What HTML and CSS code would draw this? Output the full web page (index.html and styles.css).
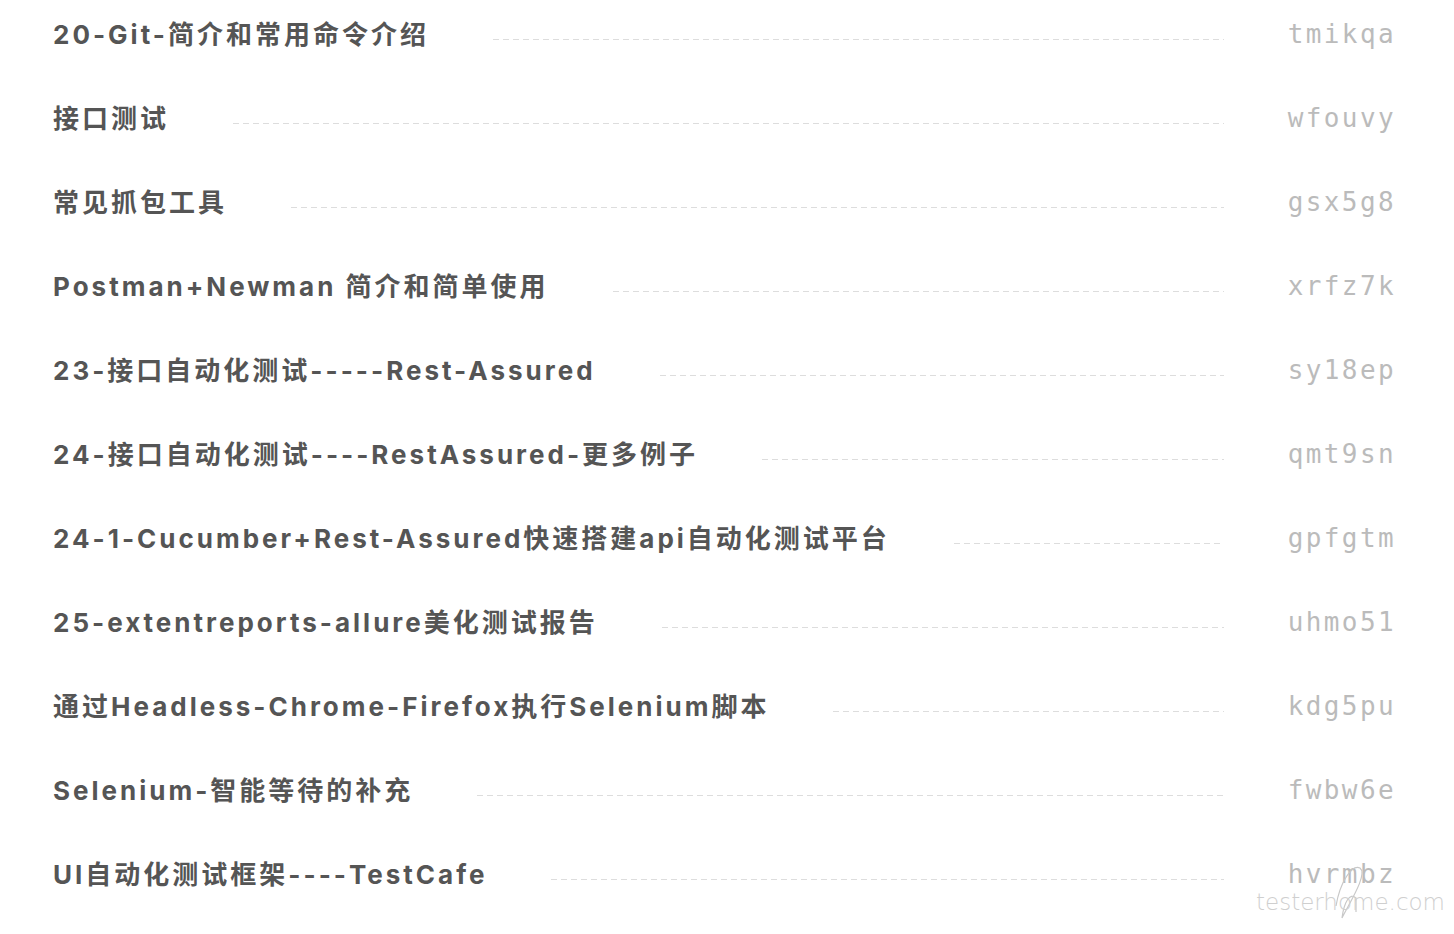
FILE: index.html
```html
<!DOCTYPE html>
<html lang="zh">
<head>
<meta charset="utf-8">
<title>列表</title>
<link rel="stylesheet" href="styles.css">
</head>
<body>
<ul class="list">
  <li class="row"><span class="title">20-Git-简介和常用命令介绍</span><span class="leader"></span><span class="code">tmikqa</span></li>
  <li class="row"><span class="title">接口测试</span><span class="leader"></span><span class="code">wfouvy</span></li>
  <li class="row"><span class="title">常见抓包工具</span><span class="leader"></span><span class="code">gsx5g8</span></li>
  <li class="row"><span class="title">Postman+Newman 简介和简单使用</span><span class="leader"></span><span class="code">xrfz7k</span></li>
  <li class="row"><span class="title">23-接口自动化测试-----Rest-Assured</span><span class="leader"></span><span class="code">sy18ep</span></li>
  <li class="row"><span class="title">24-接口自动化测试----RestAssured-更多例子</span><span class="leader"></span><span class="code">qmt9sn</span></li>
  <li class="row"><span class="title">24-1-Cucumber+Rest-Assured快速搭建api自动化测试平台</span><span class="leader"></span><span class="code">gpfgtm</span></li>
  <li class="row"><span class="title">25-extentreports-allure美化测试报告</span><span class="leader"></span><span class="code">uhmo51</span></li>
  <li class="row"><span class="title">通过Headless-Chrome-Firefox执行Selenium脚本</span><span class="leader"></span><span class="code">kdg5pu</span></li>
  <li class="row"><span class="title">Selenium-智能等待的补充</span><span class="leader"></span><span class="code">fwbw6e</span></li>
  <li class="row"><span class="title">UI自动化测试框架----TestCafe</span><span class="leader"></span><span class="code">hvrmbz</span></li>
</ul>
<div class="watermark">
  <svg class="wm-loop" width="40" height="60" viewBox="0 0 40 60"><path d="M6 44 C 10 20, 22 2, 30 6 C 38 12, 20 40, 12 56 M 12 56 C 14 40, 20 30, 26 36 L 26 50" fill="none" stroke="#c8c8c8" stroke-width="1.2"/></svg>
  <span class="wm-text">testerhome.com</span>
</div>
</body>
</html>
```

FILE: styles.css
```css
html, body {
  margin: 0;
  padding: 0;
  background: #ffffff;
  overflow: hidden;
}

.list {
  list-style: none;
  margin: -10px 0 0 0;
  padding: 0 58px 0 53px;
}

.row {
  display: flex;
  align-items: center;
  height: 84px;
}

.title {
  font-family: "Inter", "Noto Sans CJK SC", sans-serif;
  font-weight: 700;
  font-size: 26px;
  letter-spacing: 3px;
  color: #555555;
  white-space: nowrap;
}

.leader {
  flex: 1;
  height: 1px;
  margin: 14px 64px 0 64px;
  background-image: linear-gradient(to right, #dddddd 0 6px, transparent 6px 10px);
  background-size: 10px 1px;
  background-repeat: repeat-x;
}

.code {
  font-family: "DejaVu Sans Mono", "Liberation Mono", monospace;
  font-size: 26px;
  letter-spacing: 2.4px;
  color: #bbbbbb;
  white-space: nowrap;
  margin-top: 4px;
}

.watermark {
  position: absolute;
  left: 1254px;
  top: 862px;
  width: 200px;
  height: 60px;
}

.wm-loop {
  position: absolute;
  left: 76px;
  top: 0;
}

.wm-text {
  position: absolute;
  left: 2px;
  top: 27px;
  font-family: "DejaVu Sans", sans-serif;
  font-weight: 200;
  font-size: 23px;
  letter-spacing: 0;
  color: #cfcfcf;
  white-space: nowrap;
}
```
